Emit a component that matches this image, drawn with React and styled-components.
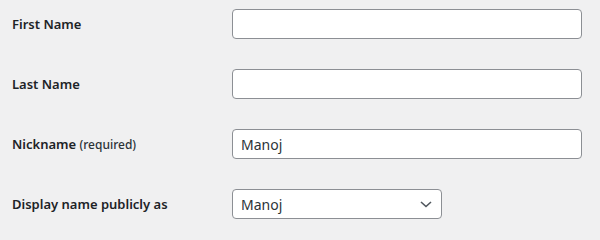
import React from 'react';
import styled, {createGlobalStyle} from 'styled-components';

const GlobalStyle = createGlobalStyle`
  html, body {
    margin: 0;
    padding: 0;
    background: #f0f0f1;
  }
  body {
    font-family: "Noto Sans", "Open Sans", sans-serif;
    color: #1d2327;
  }
`;

const Form = styled.div`
  display: flex;
  flex-direction: column;
  gap: 30px;
  padding: 9px 0 0 12px;
`;

const Row = styled.div`
  display: flex;
  align-items: center;
  height: 30px;
`;

const Label = styled.label`
  width: 220px;
  flex-shrink: 0;
  font-size: 13px;
  font-weight: 600;
  color: #1d2327;
  line-height: 1.4;
`;

const Note = styled.span`
  font-size: 12px;
  font-weight: 500;
  color: #2c3338;
`;

const TextInput = styled.input`
  box-sizing: border-box;
  width: ${(p) => p.$width || 350}px;
  height: 30px;
  margin: 0;
  padding: 0 8px;
  border: 1px solid #8c8f94;
  border-radius: 4px;
  background: #fff;
  font-family: inherit;
  font-size: 14px;
  color: #2c3338;
  outline: none;
`;

const SelectBox = styled.div`
  position: relative;
  width: 210px;
  height: 30px;
`;

const Select = styled.select`
  appearance: none;
  box-sizing: border-box;
  width: 100%;
  height: 30px;
  margin: 0;
  padding: 0 24px 0 8px;
  border: 1px solid #8c8f94;
  border-radius: 4px;
  background: #fff;
  font-family: inherit;
  font-size: 14px;
  color: #2c3338;
  outline: none;
`;

const Chevron = styled.svg`
  position: absolute;
  right: 8px;
  top: 7px;
  width: 16px;
  height: 16px;
  pointer-events: none;
`;

export default function App() {
  return (
    <>
      <GlobalStyle />
      <Form>
        <Row>
          <Label>First Name</Label>
          <TextInput type="text" defaultValue="" />
        </Row>
        <Row>
          <Label>Last Name</Label>
          <TextInput type="text" defaultValue="" />
        </Row>
        <Row>
          <Label>
            Nickname <Note>(required)</Note>
          </Label>
          <TextInput type="text" defaultValue="Manoj" />
        </Row>
        <Row>
          <Label>Display name publicly as</Label>
          <SelectBox>
            <Select defaultValue="Manoj">
              <option>Manoj</option>
            </Select>
            <Chevron viewBox="0 0 16 16">
              <path d="M3 6l5 4.5 5-4.5" fill="none" stroke="#50575e" strokeWidth="1.6" />
            </Chevron>
          </SelectBox>
        </Row>
      </Form>
    </>
  );
}
